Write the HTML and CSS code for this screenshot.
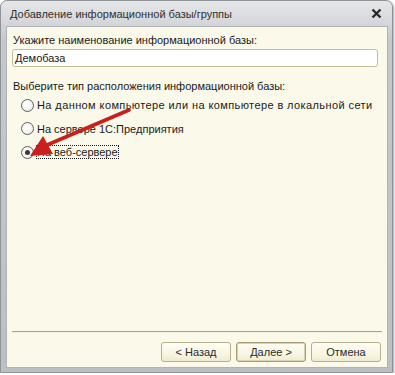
FILE: index.html
```html
<!DOCTYPE html>
<html lang="ru">
<head>
    <meta charset="UTF-8">
    <title>Добавление информационной базы/группы</title>
    <link rel="stylesheet" href="styles.css">
</head>
<body>
    <div class="window">
        <div class="titlebar">
            <span class="title">Добавление информационной базы/группы</span>
            <span class="close">
                <svg width="11" height="11" viewBox="0 0 11 11"><path d="M1.5 1.5 L9.5 9.5 M9.5 1.5 L1.5 9.5" stroke="#2a2a2a" stroke-width="2.4"/></svg>
            </span>
        </div>
        <div class="client">
            <div class="label first">Укажите наименование информационной базы:</div>
            <div class="input">Демобаза</div>

            <div class="label second">Выберите тип расположения информационной базы:</div>
            <div class="radios">
                <div class="radio"><span class="circle"></span><span class="text wide">На данном компьютере или на компьютере в локальной сети</span></div>
                <div class="radio"><span class="circle"></span><span class="text">На сервере 1С:Предприятия</span></div>
                <div class="radio checked"><span class="circle"></span><span class="text focus">На веб-сервере</span></div>
            </div>

            <div class="spacer"></div>
            <div class="separator"></div>
            <div class="buttons">
                <div class="button">&lt; Назад</div>
                <div class="button default">Далее &gt;</div>
                <div class="button">Отмена</div>
            </div>

            <!-- стрелка-указатель поверх формы -->
            <svg class="arrow" width="130" height="60" viewBox="0 0 130 60">
                <path d="M120 5 L38 40" stroke="#c9201d" stroke-width="3.6" stroke-linecap="round"/>
                <path d="M21 51 L34 31 L44 49 Z" fill="#c9201d"/>
            </svg>
        </div>
    </div>
</body>
</html>
```

FILE: styles.css
```css
body {
    margin: 0;
    background-color: #ffffff;
    font-family: "Liberation Sans", Arial, sans-serif;
    font-size: 11px;
    color: #1a1a1a;
}
.window {
    width: 393px;
    height: 373px;
    display: flex;
    flex-direction: column;
    border-radius: 7px 7px 0 0;
    background: linear-gradient(to bottom, #e6e7e9 0px, #d6d8db 20px, #c4c7cb 40px, #bcbfc3 100%);
    box-shadow: 1px 1px 2px rgba(0,0,0,0.35);
    border: 1px solid #8f9296;
    box-sizing: border-box;
}
.titlebar {
    height: 25px;
    display: flex;
    align-items: center;
    padding: 0 10px 0 9px;
    flex-shrink: 0;
}
.title {
    flex: 1;
    color: #303030;
    padding-top: 1px;
}
.close {
    display: flex;
}
.client {
    position: relative;
    flex: 1;
    margin: 0 4px 4px 5px;
    background-color: #fbf9ea;
    border: 1px solid #b0b3b6;
    display: flex;
    flex-direction: column;
    padding: 0 5px 0 5px;
}
.label {
    line-height: 13px;
    padding-left: 1px;
}
.label.first {
    margin-top: 7px;
}
.label.second {
    margin-top: 13px;
}
.input {
    margin-top: 2px;
    height: 16px;
    border: 1px solid #c6bd92;
    border-radius: 3px;
    background-color: #ffffff;
    line-height: 16px;
    padding-left: 2px;
    margin-right: 4px;
}
.radios {
    margin-top: 5px;
    padding-left: 9px;
    display: flex;
    flex-direction: column;
    gap: 9.5px;
}
.radio {
    display: flex;
    align-items: center;
    height: 14px;
}
.circle {
    width: 11px;
    height: 11px;
    border: 1px solid #5e5e5e;
    border-radius: 50%;
    background: radial-gradient(circle at 40% 40%, #ffffff 0%, #f4f4f4 60%, #dcdcdc 100%);
    margin-right: 2px;
    position: relative;
    flex-shrink: 0;
}
.checked .circle::after {
    content: "";
    position: absolute;
    left: 3px;
    top: 3px;
    width: 5px;
    height: 5px;
    border-radius: 50%;
    background: #3a3a3a;
}
.text {
    line-height: 12px;
    padding: 0 1px;
    white-space: nowrap;
}
.text.wide {
    letter-spacing: 0.4px;
}
.focus {
    border: 1px dotted #1a1a1a;
    padding: 0;
}
.spacer {
    flex: 1;
}
.separator {
    height: 0;
    border-top: 1px solid #aba67f;
    border-bottom: 1px solid #f3f0dc;
}
.buttons {
    display: flex;
    justify-content: flex-end;
    gap: 5px;
    padding: 9px 1px 5px 0;
}
.button {
    width: 68px;
    height: 18px;
    border: 1px solid #b7b08c;
    border-radius: 3px;
    background: linear-gradient(to bottom, #fffef6 0%, #f8f5e3 60%, #efebd2 100%);
    text-align: center;
    line-height: 18px;
    color: #2a2a2a;
}
.button.default {
    border-color: #a49c72;
    box-shadow: inset 0 0 0 1px #d8d2b0;
}
.arrow {
    position: absolute;
    left: 2px;
    top: 78px;
}
```
